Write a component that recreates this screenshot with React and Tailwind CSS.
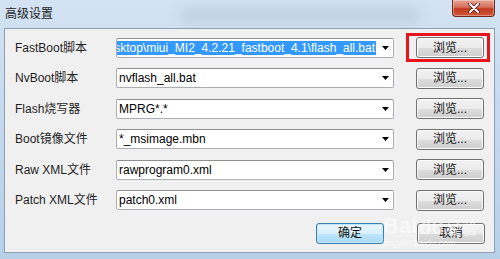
const FONT = { fontFamily: '"Liberation Sans", "Noto Sans CJK SC", sans-serif' };

const rows = [
  { label: 'FastBoot脚本', value: 'C:\\Users\\Administrator\\Desktop\\miui_MI2_4.2.21_fastboot_4.1\\flash_all.bat', selected: true },
  { label: 'NvBoot脚本', value: 'nvflash_all.bat' },
  { label: 'Flash烧写器', value: 'MPRG*.*' },
  { label: 'Boot镜像文件', value: '*_msimage.mbn' },
  { label: 'Raw XML文件', value: 'rawprogram0.xml' },
  { label: 'Patch XML文件', value: 'patch0.xml' },
];

function WinButton({ children, focused = false, className = '' }) {
  return (
    <div
      className={
        'relative flex h-[21px] w-[68px] items-center justify-center rounded-[3px] border text-[12px] text-[#111] ' +
        (focused
          ? 'border-[#3c7fb1] bg-[linear-gradient(#eaf6fd_0%,#d9f0fc_50%,#bee6fd_51%,#a7d9f5_100%)] shadow-[inset_0_0_0_1px_#bfe6fb] '
          : 'border-[#707070] bg-[linear-gradient(#f2f2f2_0%,#ebebeb_50%,#dddddd_51%,#cfcfcf_100%)] shadow-[inset_0_0_0_1px_#fcfcfc] ') +
        className
      }
    >
      {children}
    </div>
  );
}

function Combo({ value, selected }) {
  return (
    <div className="relative flex h-[20px] w-[278px] items-center rounded-[2px] border border-[#abadb3] border-t-[#8e8f8f] bg-white">
      <div className="flex h-full w-[259px] items-center justify-end overflow-hidden pl-[1px]">
        {selected ? (
          <span className="whitespace-nowrap bg-[#3399ff] pr-[1px] text-[12px] leading-[14px] text-white">{value}</span>
        ) : (
          <span className="mr-auto whitespace-nowrap pl-[1px] text-[12px] leading-[14px] text-black">{value}</span>
        )}
      </div>
      <svg className="absolute right-[4px] top-[7px]" width="7" height="4" viewBox="0 0 7 4">
        <path d="M0 0 H7 L3.5 4 Z" fill="#000" />
      </svg>
    </div>
  );
}

export default function App() {
  return (
    <div
      className="relative h-[259px] w-[500px] overflow-hidden bg-[linear-gradient(180deg,#d3e3f3_0%,#c6daef_40%,#b7cfe8_100%)]"
      style={FONT}
    >
      <div className="absolute left-[180px] top-[6px] h-[18px] w-[240px] rounded-full bg-[#aebdcc]/40 blur-[6px]" />
      <div className="relative flex h-[28px] items-start justify-between">
        <span className="ml-[5px] mt-[5px] text-[12px] text-[#1b1b1b]">高级设置</span>
        <div className="mr-[5px] flex h-[17px] w-[43px] items-center justify-center rounded-b-[4px] border border-t-0 border-[#6e2a20] bg-[linear-gradient(#e8a393_0%,#d4705c_45%,#c2391f_55%,#d0583c_100%)] shadow-[inset_0_0_0_1px_rgba(255,255,255,0.35)]">
          <svg width="12" height="10" viewBox="0 0 12 10">
            <path d="M2 1 L10 9 M10 1 L2 9" stroke="#4a1b14" strokeWidth="3.6" strokeLinecap="round" />
            <path d="M2 1 L10 9 M10 1 L2 9" stroke="#fff" strokeWidth="2" strokeLinecap="round" />
          </svg>
        </div>
      </div>

      <div className="relative ml-[4px] mr-[5px] flex h-[225px] flex-col border border-[#8e9fb2] bg-[#f0f0f0] pl-[10px] pt-[8px]">
        <div className="flex flex-col gap-[9.6px]">
          {rows.map((r, i) => (
            <div key={r.label} className="flex h-[21px] items-center">
              <span className="w-[101px] whitespace-nowrap text-[12px] text-[#1e1e1e]">{r.label}</span>
              <Combo value={r.value} selected={r.selected} />
              <div className="relative ml-[22px]">
                <WinButton>浏览...</WinButton>
                {i === 0 && (
                  <div className="absolute -bottom-[4px] -left-[10px] -right-[6px] -top-[4px] border-[3px] border-[#e8141b]" />
                )}
              </div>
            </div>
          ))}
        </div>
        <div className="mt-[12px] flex justify-end gap-[33px] pr-[9px]">
          <WinButton focused className="w-[58px]">确定</WinButton>
          <WinButton>取消</WinButton>
        </div>
        <div className="pointer-events-none absolute left-[378px] top-[186px] flex items-end gap-[2px] text-white/60">
          <span className="text-[22px] font-bold leading-none">Bai</span>
          <span className="text-[20px] font-bold leading-none">du</span>
          <span className="text-[16px] leading-none">经验</span>
        </div>
        <span className="pointer-events-none absolute left-[378px] top-[208px] text-[9px] text-white/60">jingyan.baidu.com</span>
      </div>
    </div>
  );
}
